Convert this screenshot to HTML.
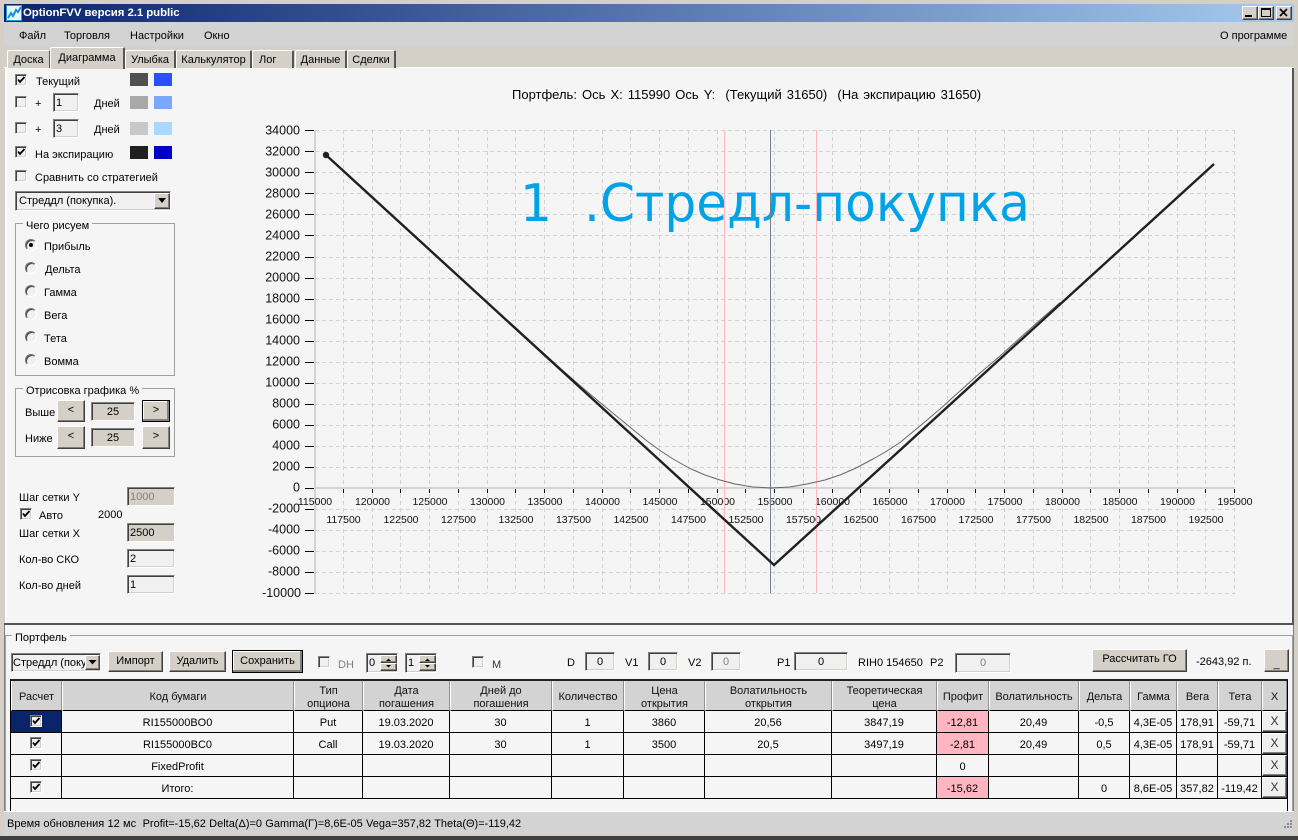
<!DOCTYPE html>
<html lang="ru"><head><meta charset="utf-8"><title>OptionFVV</title>
<style>
html,body{margin:0;padding:0;background:#d4d0c8}
#w{position:relative;width:1298px;height:840px;overflow:hidden;background:#d4d0c8;font:11px "Liberation Sans",sans-serif;color:#000}
.a{position:absolute;box-sizing:border-box}
.t{position:absolute;white-space:nowrap;line-height:14px;height:14px;margin-top:1px}
.cb{position:absolute;width:12px;height:12px;box-sizing:border-box;background:#f0f0f0;border:1px solid;border-color:#808080 #fff #fff #808080;box-shadow:inset 1px 1px #404040,inset -1px -1px #d4d0c8}
.cb svg{position:absolute;left:0;top:0}
.in{position:absolute;box-sizing:border-box;background:#f0f0f0;border:1px solid;border-color:#808080 #fff #fff #808080;box-shadow:inset 1px 1px #404040,inset -1px -1px #d4d0c8;line-height:18px;padding-left:2px;white-space:nowrap;overflow:hidden}
.b{position:absolute;box-sizing:border-box;background:#d4d0c8;border:1px solid;border-color:#fff #404040 #404040 #fff;box-shadow:inset -1px -1px #808080;text-align:center;white-space:nowrap;line-height:19px}
.d{outline:1px solid #000;outline-offset:-1px;box-shadow:inset -2px -2px #808080,inset 1px 1px #fff}
.r{position:absolute;width:12px;height:12px;border-radius:50%;box-sizing:border-box;background:#f0f0f0;border:1px solid;border-color:#707070 #fff #fff #707070;box-shadow:inset 1px 1px #404040}
.g{position:absolute;box-sizing:border-box;border:1px solid #a0a0a0}
.l{position:absolute;background:#f5f5f5;padding:0 3px;white-space:nowrap;line-height:14px;margin-top:1px}
.tab{position:absolute;top:50px;height:18px;box-sizing:border-box;background:#d4d0c8;border-top:1px solid #fff;border-left:1px solid #fff;border-right:2px solid #555;border-radius:2px 2px 0 0;text-align:center;line-height:19px;white-space:nowrap}
table{position:absolute;left:11px;top:681px;border-collapse:separate;border-spacing:0;table-layout:fixed;width:1276px;background:#f5f5f5}
th{height:30px;box-sizing:border-box;padding:4px 0 0;background:#d3d3d3;font-weight:normal;font-size:11px;line-height:12.5px;border-right:1px solid #909090;border-left:1px solid #fff;border-bottom:1px solid #000;color:#111}
td{height:22px;box-sizing:border-box;padding:3px 0 0;border-right:1px solid #000;border-bottom:1px solid #000;text-align:center;font-size:11px;line-height:13px;position:relative;overflow:hidden;white-space:nowrap}
td.p{background:#ffb6c1}
td.s{background:#0a246a}
td .cb{left:19px;top:4px;position:absolute}
td.x{border-right:0;padding:0}
td.x div{position:absolute;left:0;top:0;width:25px;height:21px;box-sizing:border-box;background:#f0f0f0;border:1px solid;border-color:#fff #404040 #404040 #fff;box-shadow:inset -1px -1px #808080;line-height:19px;font-size:12px;color:#333}
</style></head><body><div id="w">

<div class="a" style="left:4px;top:4px;width:1290px;height:18px;background:linear-gradient(90deg,#0a246a,#a6caf0)"></div>
<svg class="a" style="left:6px;top:5px" width="16" height="16" viewBox="0 0 16 16"><rect width="16" height="16" fill="#1c9ae8"/><rect x="1" y="1" width="14" height="14" fill="#e8f6ff"/><path d="M2 13L5 8L7 11L10 5L12 7L15 2" fill="none" stroke="#1a8fe0" stroke-width="2"/></svg>
<div class="t" style="left:23px;top:6px;margin-top:0;color:#fff;font-weight:bold;font-size:11.4px;letter-spacing:-.05px">OptionFVV версия 2.1 public</div>
<div class="b" style="left:1242px;top:6px;width:16px;height:14px"></div><div class="a" style="left:1245px;top:15px;width:7px;height:2px;background:#000"></div>
<div class="b" style="left:1258px;top:6px;width:16px;height:14px"></div><div class="a" style="left:1261px;top:8px;width:10px;height:9px;border:1px solid #000;border-top-width:2px"></div>
<div class="b" style="left:1276px;top:6px;width:16px;height:14px"></div><svg class="a" style="left:1279px;top:8px" width="10" height="10"><path d="M1 1L8 8M8 1L1 8" stroke="#000" stroke-width="1.6"/></svg>

<div class="a" style="left:4px;top:22px;width:1290px;height:24px;background:#d3d3d3"></div>
<div class="t" style="left:19px;top:28px">Файл</div>
<div class="t" style="left:64px;top:28px">Торговля</div>
<div class="t" style="left:130px;top:28px">Настройки</div>
<div class="t" style="left:204px;top:28px">Окно</div>
<div class="t" style="left:1220px;top:28px">О программе</div>

<div class="a" style="left:4px;top:67px;width:1290px;height:1px;background:#fff"></div>
<div class="tab" style="left:7px;width:44px">Доска</div>
<div class="tab" style="left:125px;width:51px">Улыбка</div>
<div class="tab" style="left:176px;width:76px">Калькулятор</div>
<div class="tab" style="left:252px;width:42px;text-align:left;padding-left:6px">Лог</div>
<div class="tab" style="left:295px;width:52px">Данные</div>
<div class="tab" style="left:347px;width:49px">Сделки</div>
<div class="tab" style="left:50px;top:47px;width:75px;height:22px;z-index:2;line-height:21px">Диаграмма</div>

<div class="a" style="left:5px;top:68px;width:1289px;height:557px;background:#f5f5f5;border-left:2px solid #fff;border-right:2px solid #555;border-bottom:2px solid #d4d0c8"></div>

<svg class="a" style="left:0;top:0" width="1298" height="640" viewBox="0 0 1298 640">
<path fill="none" stroke="#d3d3d3" stroke-dasharray="4 3" d="M343.5 130V593M372.5 130V593M400.5 130V593M429.5 130V593M458.5 130V593M487.5 130V593M515.5 130V593M544.5 130V593M573.5 130V593M602.5 130V593M630.5 130V593M659.5 130V593M688.5 130V593M717.5 130V593M745.5 130V593M774.5 130V593M803.5 130V593M832.5 130V593M860.5 130V593M889.5 130V593M918.5 130V593M947.5 130V593M975.5 130V593M1004.5 130V593M1033.5 130V593M1062.5 130V593M1090.5 130V593M1119.5 130V593M1148.5 130V593M1177.5 130V593M1205.5 130V593M1234.5 130V593"/>
<path fill="none" stroke="#d3d3d3" stroke-dasharray="4 3" d="M315 130.5H1235M315 151.5H1235M315 172.5H1235M315 193.5H1235M315 214.5H1235M315 235.5H1235M315 257.5H1235M315 278.5H1235M315 299.5H1235M315 320.5H1235M315 341.5H1235M315 362.5H1235M315 383.5H1235M315 404.5H1235M315 425.5H1235M315 446.5H1235M315 467.5H1235M315 509.5H1235M315 530.5H1235M315 551.5H1235M315 572.5H1235M315 593.5H1235"/>
<path fill="none" stroke="#d3d3d3" stroke-width="2" d="M315 130V594M315 488H1235"/>
<path fill="none" stroke="#000" d="M305 130.5H314M305 151.5H314M305 172.5H314M305 193.5H314M305 214.5H314M305 235.5H314M305 257.5H314M305 278.5H314M305 299.5H314M305 320.5H314M305 341.5H314M305 362.5H314M305 383.5H314M305 404.5H314M305 425.5H314M305 446.5H314M305 467.5H314M305 488.5H314M305 509.5H314M305 530.5H314M305 551.5H314M305 572.5H314M305 593.5H314"/>
<path fill="none" stroke="#000" d="M343.5 489V493M372.5 489V493M400.5 489V493M429.5 489V493M458.5 489V493M487.5 489V493M515.5 489V493M544.5 489V493M573.5 489V493M602.5 489V493M630.5 489V493M659.5 489V493M688.5 489V493M717.5 489V493M745.5 489V493M774.5 489V493M803.5 489V493M832.5 489V493M860.5 489V493M889.5 489V493M918.5 489V493M947.5 489V493M975.5 489V493M1004.5 489V493M1033.5 489V493M1062.5 489V493M1090.5 489V493M1119.5 489V493M1148.5 489V493M1177.5 489V493M1205.5 489V493M1234.5 489V493"/>
<g font-family="Liberation Sans,sans-serif" font-size="12.5" text-anchor="end" fill="#111">
<text x="300" y="134.5">34000</text><text x="300" y="155.5">32000</text><text x="300" y="176.5">30000</text><text x="300" y="197.5">28000</text><text x="300" y="218.5">26000</text><text x="300" y="239.5">24000</text><text x="300" y="260.5">22000</text><text x="300" y="281.5">20000</text><text x="300" y="302.5">18000</text><text x="300" y="323.5">16000</text><text x="300" y="344.5">14000</text><text x="300" y="365.5">12000</text><text x="300" y="386.5">10000</text><text x="300" y="407.5">8000</text><text x="300" y="428.5">6000</text><text x="300" y="449.5">4000</text><text x="300" y="470.5">2000</text><text x="300" y="491.5">0</text><text x="300" y="512.5">-2000</text><text x="300" y="533.5">-4000</text><text x="300" y="554.5">-6000</text><text x="300" y="575.5">-8000</text><text x="301" y="597">-10000</text>
</g>
<g font-family="Liberation Sans,sans-serif" font-size="10.5" text-anchor="middle" fill="#111">
<text x="315" y="505">115000</text><text x="372.5" y="505">120000</text><text x="430" y="505">125000</text><text x="487.5" y="505">130000</text><text x="545" y="505">135000</text><text x="602.5" y="505">140000</text><text x="660" y="505">145000</text><text x="717.5" y="505">150000</text><text x="775" y="505">155000</text><text x="832.5" y="505">160000</text><text x="890" y="505">165000</text><text x="947.5" y="505">170000</text><text x="1005" y="505">175000</text><text x="1062.5" y="505">180000</text><text x="1120" y="505">185000</text><text x="1177.5" y="505">190000</text><text x="1235" y="505">195000</text>
<text x="343.5" y="523">117500</text><text x="401" y="523">122500</text><text x="458.5" y="523">127500</text><text x="516" y="523">132500</text><text x="573.5" y="523">137500</text><text x="631" y="523">142500</text><text x="688.5" y="523">147500</text><text x="746" y="523">152500</text><text x="803.5" y="523">157500</text><text x="861" y="523">162500</text><text x="918.5" y="523">167500</text><text x="976" y="523">172500</text><text x="1033.5" y="523">177500</text><text x="1091" y="523">182500</text><text x="1148.5" y="523">187500</text><text x="1206" y="523">192500</text>
</g>
<text x="520" y="221" font-family="DejaVu Sans,sans-serif" font-size="52" fill="#00a2e8" xml:space="preserve" textLength="510" lengthAdjust="spacingAndGlyphs">1  .Стредл-покупка</text>
<path fill="none" stroke="#ffb6c1" d="M724.5 130V593M816.5 130V593"/>
<path fill="none" stroke="#708090" d="M770.5 130V593"/>
<polyline fill="none" stroke="#666" stroke-linejoin="round" points="540,350 560,368 580,385.500 600,402.500 620,419 647,441 660,450.500 673,459 690,468.500 705,475 720,480 735,484 753,487 771,488 790,487 807,484 825,480 840,475 855,468.500 873,459 887,451 900,442.500 920,426 940,409 960,391 980,373 1000,356 1020,338 1040,320 1060,302.500"/>
<path fill="none" stroke="#202020" stroke-width="2.4" d="M326 155L774 565L1214 164"/>
<circle cx="326" cy="155" r="3.200" fill="#202020"/>
</svg>

<div class="t" style="left:512px;top:87px;font-size:13px;word-spacing:1.45px">Портфель: Ось X: 115990 Ось Y:&nbsp; (Текущий 31650)&nbsp; (На экспирацию 31650)</div>

<div class="cb" style="left:15px;top:74px"><svg width="10" height="10"><path d="M2 4.500L4 7L8.500 2" fill="none" stroke="#000" stroke-width="1.800"/></svg></div>
<div class="t" style="left:36px;top:74px">Текущий</div>
<div class="a" style="left:130px;top:73px;width:18px;height:13px;background:#505050"></div><div class="a" style="left:154px;top:73px;width:18px;height:13px;background:#2b50ff"></div>

<div class="cb" style="left:15px;top:96px"></div>
<div class="t" style="left:35px;top:96px">+</div><div class="in" style="left:53px;top:93px;width:26px;height:19px">1</div>
<div class="t" style="left:94px;top:96px">Дней</div>
<div class="a" style="left:130px;top:96px;width:18px;height:13px;background:#a8a8a8"></div><div class="a" style="left:154px;top:96px;width:18px;height:13px;background:#7aa8ff"></div>

<div class="cb" style="left:15px;top:122px"></div>
<div class="t" style="left:35px;top:122px">+</div><div class="in" style="left:53px;top:119px;width:26px;height:19px">3</div>
<div class="t" style="left:94px;top:122px">Дней</div>
<div class="a" style="left:130px;top:122px;width:18px;height:13px;background:#c8c8c8"></div><div class="a" style="left:154px;top:122px;width:18px;height:13px;background:#aad8ff"></div>

<div class="cb" style="left:15px;top:146px"><svg width="10" height="10"><path d="M2 4.500L4 7L8.500 2" fill="none" stroke="#000" stroke-width="1.800"/></svg></div>
<div class="t" style="left:35px;top:147px">На экспирацию</div>
<div class="a" style="left:130px;top:146px;width:18px;height:13px;background:#202020"></div><div class="a" style="left:154px;top:146px;width:18px;height:13px;background:#0000c8"></div>

<div class="cb" style="left:15px;top:170px"></div>
<div class="t" style="left:35px;top:170px">Сравнить со стратегией</div>

<div class="in" style="left:15px;top:191px;width:156px;height:20px;line-height:19px;padding-left:3px">Стреддл (покупка).</div>
<div class="b" style="left:154px;top:193px;width:16px;height:16px"></div><svg class="a" style="left:157px;top:198px" width="10" height="6"><path d="M1 0H9L5 5Z" fill="#000"/></svg>

<div class="g" style="left:15px;top:223px;width:160px;height:153px"></div><div class="l" style="left:23px;top:218px">Чего рисуем</div>
<div class="r" style="left:25px;top:239px"></div><div class="a" style="left:29px;top:243px;width:4px;height:4px;border-radius:50%;background:#000"></div><div class="t" style="left:44px;top:239px">Прибыль</div>
<div class="r" style="left:25px;top:262px"></div><div class="t" style="left:45px;top:262px">Дельта</div>
<div class="r" style="left:25px;top:285px"></div><div class="t" style="left:44px;top:285px">Гамма</div>
<div class="r" style="left:25px;top:308px"></div><div class="t" style="left:44px;top:308px">Вега</div>
<div class="r" style="left:25px;top:331px"></div><div class="t" style="left:44px;top:331px">Тета</div>
<div class="r" style="left:25px;top:354px"></div><div class="t" style="left:44px;top:354px">Вомма</div>

<div class="g" style="left:15px;top:388px;width:160px;height:69px"></div><div class="l" style="left:23px;top:383px">Отрисовка графика %</div>
<div class="t" style="left:25px;top:405px">Выше</div>
<div class="b" style="left:57px;top:400px;width:28px;height:22px">&lt;</div>
<div class="in" style="left:91px;top:402px;width:44px;height:19px;background:#d4d0c8;text-align:center;padding:0">25</div>
<div class="b d" style="left:142px;top:400px;width:28px;height:22px">&gt;</div>
<div class="t" style="left:25px;top:431px">Ниже</div>
<div class="b" style="left:57px;top:426px;width:28px;height:23px">&lt;</div>
<div class="in" style="left:91px;top:428px;width:44px;height:19px;background:#d4d0c8;text-align:center;padding:0">25</div>
<div class="b" style="left:142px;top:426px;width:28px;height:23px">&gt;</div>

<div class="t" style="left:19px;top:490px">Шаг сетки Y</div>
<div class="in" style="left:127px;top:487px;width:48px;height:19px;background:#d4d0c8;color:#808080">1000</div>
<div class="cb" style="left:20px;top:508px"><svg width="10" height="10"><path d="M2 4.500L4 7L8.500 2" fill="none" stroke="#000" stroke-width="1.800"/></svg></div>
<div class="t" style="left:39px;top:508px">Авто</div>
<div class="t" style="left:98px;top:507px">2000</div>
<div class="t" style="left:19px;top:526px">Шаг сетки X</div>
<div class="in" style="left:127px;top:523px;width:48px;height:19px;background:#d4d0c8">2500</div>
<div class="t" style="left:19px;top:552px">Кол-во СКО</div>
<div class="in" style="left:127px;top:549px;width:48px;height:19px">2</div>
<div class="t" style="left:19px;top:578px">Кол-во дней</div>
<div class="in" style="left:127px;top:575px;width:48px;height:19px">1</div>

<div class="a" style="left:4px;top:623px;width:1290px;height:2px;background:#555"></div>
<div class="a" style="left:4px;top:625px;width:1290px;height:187px;background:#f5f5f5;border-left:1px solid #808080;border-right:1px solid #808080"></div>
<div class="g" style="left:5px;top:635px;width:1288px;height:190px;border-bottom:0"></div>
<div class="l" style="left:12px;top:630px">Портфель</div>

<div class="in" style="left:11px;top:653px;width:90px;height:19px;line-height:18px;padding-left:1px">Стреддл (поку</div>
<div class="b" style="left:85px;top:655px;width:15px;height:15px"></div><svg class="a" style="left:88px;top:660px" width="9" height="6"><path d="M0.500 0H8.500L4.500 4.500Z" fill="#000"/></svg>
<div class="b" style="left:108px;top:651px;width:55px;height:21px">Импорт</div>
<div class="b" style="left:169px;top:651px;width:57px;height:21px">Удалить</div>
<div class="b d" style="left:232px;top:650px;width:71px;height:23px;line-height:21px">Сохранить</div>
<div class="cb" style="left:318px;top:656px"></div>
<div class="t" style="left:338px;top:657px;color:#808080">DH</div>
<div class="in" style="left:366px;top:653px;width:32px;height:20px">0</div>
<div class="b" style="left:380px;top:655px;width:17px;height:8px"></div><div class="b" style="left:380px;top:663px;width:17px;height:8px"></div>
<svg class="a" style="left:385px;top:656px" width="7" height="14"><path d="M1 5H6L3.500 2.500ZM1 9H6L3.500 11.500Z" fill="#000"/></svg>
<div class="in" style="left:405px;top:653px;width:32px;height:20px">1</div>
<div class="b" style="left:419px;top:655px;width:17px;height:8px"></div><div class="b" style="left:419px;top:663px;width:17px;height:8px"></div>
<svg class="a" style="left:424px;top:656px" width="7" height="14"><path d="M1 5H6L3.500 2.500ZM1 9H6L3.500 11.500Z" fill="#000"/></svg>
<div class="cb" style="left:472px;top:656px"></div>
<div class="t" style="left:492px;top:657px;color:#333">M</div>
<div class="t" style="left:567px;top:655px">D</div>
<div class="in" style="left:585px;top:652px;width:30px;height:19px;text-align:center;padding:0">0</div>
<div class="t" style="left:625px;top:655px">V1</div>
<div class="in" style="left:648px;top:652px;width:30px;height:19px;text-align:center;padding:0">0</div>
<div class="t" style="left:688px;top:655px">V2</div>
<div class="in" style="left:711px;top:652px;width:30px;height:19px;text-align:center;padding:0;color:#808080">0</div>
<div class="t" style="left:777px;top:655px">P1</div>
<div class="in" style="left:794px;top:652px;width:54px;height:19px;text-align:center;padding:0">0</div>
<div class="t" style="left:858px;top:655px">RIH0 154650</div>
<div class="t" style="left:930px;top:655px">P2</div>
<div class="in" style="left:955px;top:653px;width:56px;height:20px;text-align:center;padding:0;color:#808080">0</div>
<div class="b" style="left:1092px;top:649px;width:95px;height:23px">Рассчитать ГО</div>
<div class="t" style="left:1196px;top:654px">-2643,92 п.</div>
<div class="b" style="left:1264px;top:649px;width:25px;height:23px;line-height:28px">_</div>

<div class="a" style="left:10px;top:679px;width:1278px;height:2px;background:#222"></div>
<div class="a" style="left:10px;top:680px;width:1px;height:132px;background:#000"></div>
<div class="a" style="left:1287px;top:680px;width:1px;height:132px;background:#000"></div>
<table>
<colgroup><col style="width:51px"><col style="width:232px"><col style="width:69px"><col style="width:87px"><col style="width:102px"><col style="width:72px"><col style="width:81px"><col style="width:127px"><col style="width:105px"><col style="width:52px"><col style="width:90px"><col style="width:51px"><col style="width:47px"><col style="width:41px"><col style="width:44px"><col style="width:25px"></colgroup>
<tr><th>Расчет</th><th>Код бумаги</th><th>Тип<br>опциона</th><th>Дата<br>погашения</th><th>Дней до<br>погашения</th><th>Количество</th><th>Цена<br>открытия</th><th>Волатильность<br>открытия</th><th>Теоретическая<br>цена</th><th>Профит</th><th>Волатильность</th><th>Дельта</th><th>Гамма</th><th>Вега</th><th>Тета</th><th>X</th></tr>
<tr><td class="s"><div class="cb"><svg width="10" height="10"><path d="M2 4.500L4 7L8.500 2" fill="none" stroke="#000" stroke-width="1.800"/></svg></div></td><td>RI155000BO0</td><td>Put</td><td>19.03.2020</td><td>30</td><td>1</td><td>3860</td><td>20,56</td><td>3847,19</td><td class="p">-12,81</td><td>20,49</td><td>-0,5</td><td>4,3E-05</td><td>178,91</td><td>-59,71</td><td class="x"><div>X</div></td></tr>
<tr><td><div class="cb"><svg width="10" height="10"><path d="M2 4.500L4 7L8.500 2" fill="none" stroke="#000" stroke-width="1.800"/></svg></div></td><td>RI155000BC0</td><td>Call</td><td>19.03.2020</td><td>30</td><td>1</td><td>3500</td><td>20,5</td><td>3497,19</td><td class="p">-2,81</td><td>20,49</td><td>0,5</td><td>4,3E-05</td><td>178,91</td><td>-59,71</td><td class="x"><div>X</div></td></tr>
<tr><td><div class="cb"><svg width="10" height="10"><path d="M2 4.500L4 7L8.500 2" fill="none" stroke="#000" stroke-width="1.800"/></svg></div></td><td>FixedProfit</td><td></td><td></td><td></td><td></td><td></td><td></td><td></td><td>0</td><td></td><td></td><td></td><td></td><td></td><td class="x"><div>X</div></td></tr>
<tr><td><div class="cb"><svg width="10" height="10"><path d="M2 4.500L4 7L8.500 2" fill="none" stroke="#000" stroke-width="1.800"/></svg></div></td><td>Итого:</td><td></td><td></td><td></td><td></td><td></td><td></td><td></td><td class="p">-15,62</td><td></td><td>0</td><td>8,6E-05</td><td>357,82</td><td>-119,42</td><td class="x"><div>X</div></td></tr>
</table>

<div class="a" style="left:4px;top:811px;width:1290px;height:1px;background:#fff"></div>
<div class="a" style="left:4px;top:812px;width:1290px;height:22px;background:#d3d3d3"></div>
<div class="a" style="left:4px;top:834px;width:1290px;height:2px;background:#d4d0c8"></div>
<div class="a" style="left:0;top:836px;width:1298px;height:4px;background:#404040"></div>
<div class="t" style="left:7px;top:816px;word-spacing:.2px">Время обновления 12 мс&nbsp; Profit=-15,62 Delta(Δ)=0 Gamma(Γ)=8,6E-05 Vega=357,82 Theta(Θ)=-119,42</div>
<svg class="a" style="left:1281px;top:819px" width="12" height="12"><path d="M9 1h2v2H9zM6 4h2v2H6zM9 4h2v2H9zM3 7h2v2H3zM6 7h2v2H6zM9 7h2v2H9z" fill="#8a8a8a"/></svg>
</div></body></html>
